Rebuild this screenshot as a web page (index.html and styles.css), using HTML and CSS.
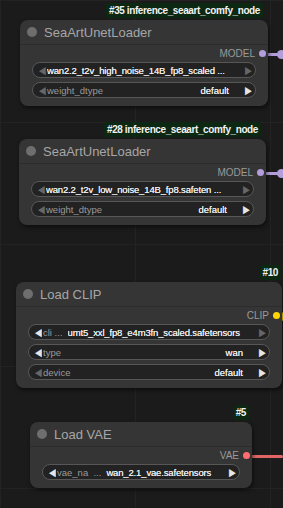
FILE: index.html
```html
<!DOCTYPE html>
<html lang="en">
  <head>
    <meta charset="UTF-8" />
    <meta name="viewport" content="width=device-width, initial-scale=1.0" />
    <title>Graph</title>
    <link rel="stylesheet" href="styles.css">
  </head>
  <body>
    <div class="canvas">
      <!-- links leaving the right side of the view -->
      <div class="link link-model" style="top: 53px; left: 264px; width: 19px;"></div>
      <div class="link-end link-model-end" style="top: 50px; left: 277px;"></div>
      <div class="link link-model" style="top: 172px; left: 262px; width: 21px;"></div>
      <div class="link-end link-model-end" style="top: 169px; left: 277px;"></div>
      <div class="link-end link-clip-end" style="top: 312px; left: 280px;"></div>
      <div class="link link-vae" style="top: 455px; left: 248px; width: 35px;"></div>

      <div class="node node-1">
        <div class="badge">#35 inference_seaart_comfy_node</div>
        <div class="node-title"><span class="title-dot"></span>SeaArtUnetLoader</div>
        <div class="node-body">
          <div class="output">MODEL <span class="slot slot-model"></span></div>
          <div class="widget">
            <span class="arrow off">&#9664;</span>
            <span class="value full">wan2.2_t2v_high_noise_14B_fp8_scaled ...</span>
            <span class="arrow off">&#9654;</span>
          </div>
          <div class="widget">
            <span class="arrow off">&#9664;</span>
            <span class="label">weight_dtype</span>
            <span class="value">default</span>
            <span class="arrow">&#9654;</span>
          </div>
        </div>
      </div>

      <div class="node node-2">
        <div class="badge">#28 inference_seaart_comfy_node</div>
        <div class="node-title"><span class="title-dot"></span>SeaArtUnetLoader</div>
        <div class="node-body">
          <div class="output">MODEL <span class="slot slot-model"></span></div>
          <div class="widget">
            <span class="arrow off">&#9664;</span>
            <span class="value full">wan2.2_t2v_low_noise_14B_fp8.safeten ...</span>
            <span class="arrow off">&#9654;</span>
          </div>
          <div class="widget">
            <span class="arrow off">&#9664;</span>
            <span class="label">weight_dtype</span>
            <span class="value">default</span>
            <span class="arrow">&#9654;</span>
          </div>
        </div>
      </div>

      <div class="node node-3">
        <div class="badge">#10</div>
        <div class="node-title"><span class="title-dot"></span>Load CLIP</div>
        <div class="node-body">
          <div class="output">CLIP <span class="slot slot-clip"></span></div>
          <div class="widget">
            <span class="arrow">&#9664;</span>
            <span class="label short">cli ...</span>
            <span class="value full">umt5_xxl_fp8_e4m3fn_scaled.safetensors</span>
            <span class="arrow off">&#9654;</span>
          </div>
          <div class="widget">
            <span class="arrow">&#9664;</span>
            <span class="label">type</span>
            <span class="value">wan</span>
            <span class="arrow">&#9654;</span>
          </div>
          <div class="widget">
            <span class="arrow off">&#9664;</span>
            <span class="label">device</span>
            <span class="value">default</span>
            <span class="arrow">&#9654;</span>
          </div>
        </div>
      </div>

      <div class="node node-4">
        <div class="badge">#5</div>
        <div class="node-title"><span class="title-dot"></span>Load VAE</div>
        <div class="node-body">
          <div class="output">VAE <span class="slot slot-vae"></span></div>
          <div class="widget">
            <span class="arrow">&#9664;</span>
            <span class="label short">vae_na &nbsp;...</span>
            <span class="value full">wan_2.1_vae.safetensors</span>
            <span class="arrow">&#9654;</span>
          </div>
        </div>
      </div>
    </div>
  </body>
</html>
```

FILE: styles.css
```css
* {
  box-sizing: border-box;
}

body {
  margin: 0;
  background-color: #1b1b1b;
  font-family: "Liberation Sans", Arial, sans-serif;
}

.canvas {
  position: relative;
  width: 283px;
  height: 508px;
  overflow: hidden;
  background-color: #1b1b1b;
  background-image:
    linear-gradient(to right, #232323 1px, transparent 1px),
    linear-gradient(to bottom, #232323 1px, transparent 1px);
  background-size: 135px 122px;
}

/* nodes sit on a free canvas, so their place is the content */
.node {
  position: absolute;
  background-color: #353535;
  border-radius: 8px;
  box-shadow: 1px 2px 4px rgba(0, 0, 0, 0.55);
}

.node-1 { left: 20px; top: 20px; width: 248px; }
.node-2 { left: 19px; top: 139px; width: 247px; }
.node-3 { left: 16px; top: 282px; width: 266px; }
.node-4 { left: 30px; top: 422px; width: 222px; }

.badge {
  position: absolute;
  right: 5px;
  bottom: 100%;
  margin-bottom: 2px;
  background-color: #0d2812;
  color: #f2f2f2;
  font-size: 10px;
  font-weight: bold;
  letter-spacing: -0.4px;
  line-height: 15px;
  padding: 0 3px;
  border-radius: 3px;
  white-space: nowrap;
}

.node-3 .badge { right: 1px; }
.node-4 .badge { right: 3px; }

.node-title {
  display: flex;
  align-items: center;
  height: 25px;
  padding-left: 7px;
  color: #a6a6a6;
  font-size: 13px;
  border-bottom: 1px solid #2c2c2c;
}

.title-dot {
  width: 10px;
  height: 10px;
  border-radius: 50%;
  background-color: #6e6e6e;
  margin-right: 7px;
}

.node-body {
  padding: 2px 12px 8px;
  display: flex;
  flex-direction: column;
  gap: 4px;
}

.output {
  display: flex;
  justify-content: flex-end;
  align-items: center;
  height: 12px;
  margin-right: -10px;
  margin-bottom: -1px;
  color: #9a9a9a;
  font-size: 10px;
  gap: 4px;
}

.slot {
  width: 7px;
  height: 7px;
  border-radius: 50%;
}

.slot-model { background-color: #b39ddb; }
.slot-clip { background-color: #ffd500; }
.slot-vae { background-color: #ff6e6e; }

.widget {
  display: flex;
  align-items: center;
  height: 16px;
  background-color: #222;
  border: 1px solid #575757;
  border-radius: 8px;
  padding: 0 3px 0 5px;
  font-size: 9.5px;
  white-space: nowrap;
  overflow: hidden;
}

.arrow {
  color: #e6e6e6;
  font-size: 11px;
  line-height: 1;
  flex-shrink: 0;
  transform: scaleX(0.8);
}

.arrow.off {
  color: #666;
}

.label {
  color: #9a9a9a;
  margin-left: 1px;
  flex: 1;
}

.label.short {
  flex: none;
  margin-right: 4px;
}

.value {
  color: #ececec;
  margin-right: 15px;
  text-shadow: 0 0 0.4px #ececec;
}

.value.full {
  flex: 1;
  margin-left: 1px;
  margin-right: 6px;
  letter-spacing: -0.15px;
  overflow: hidden;
}

.link {
  position: absolute;
  height: 3px;
  border-radius: 2px;
}

.link-model { background-color: #b39ddb; }
.link-vae { background-color: #e06666; }

.link-end {
  position: absolute;
  width: 9px;
  height: 9px;
  border-radius: 50%;
}

.link-model-end { background-color: #b39ddb; }
.link-clip-end { background-color: #ffd500; }
```
